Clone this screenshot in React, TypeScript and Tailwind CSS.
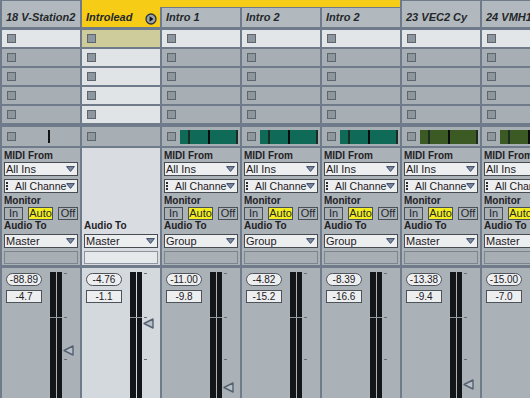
import React from "react";

type Col = {
  name: string;
  kind: "plain" | "group" | "member";
  clip: "none" | "teal" | "olive" | "line";
  route: string;
  vol: string;
  peak: string;
  fader?: number;
};

const cols: Col[] = [
  { name: "18 V-Station2", kind: "plain", clip: "line", route: "Master", vol: "-88.89", peak: "-4.7", fader: 77 },
  { name: "Introlead", kind: "group", clip: "none", route: "Master", vol: "-4.76", peak: "-1.1", fader: 50 },
  { name: "Intro 1", kind: "member", clip: "teal", route: "Group", vol: "-11.00", peak: "-9.8", fader: 114 },
  { name: "Intro 2", kind: "member", clip: "teal", route: "Group", vol: "-4.82", peak: "-15.2" },
  { name: "Intro 2", kind: "member", clip: "teal", route: "Group", vol: "-8.39", peak: "-16.6" },
  { name: "23 VEC2 Cy", kind: "plain", clip: "olive", route: "Master", vol: "-13.38", peak: "-9.4", fader: 111 },
  { name: "24 VMH1", kind: "plain", clip: "olive", route: "Master", vol: "-15.00", peak: "-7.0" },
];

function Square() {
  return <div className="w-[9px] h-[9px] shrink-0 border border-[#5d666f] bg-[#8f979e]" />;
}

function PlayIcon() {
  return (
    <svg width="12" height="12" viewBox="0 0 12 12" className="shrink-0">
      <circle cx="6" cy="6" r="5" fill="#9aa2aa" stroke="#2f3337" strokeWidth="1.3" />
      <path d="M4.6 3.3 L8.4 6 L4.6 8.7 Z" fill="#111" />
    </svg>
  );
}

function Header({ c }: { c: Col }) {
  const text = (
    <span className="text-[11px] leading-[13px] font-bold italic text-[#24272b] whitespace-nowrap">
      {c.name}
    </span>
  );
  if (c.kind === "group") {
    return (
      <div className="h-[27px] bg-[#f6cc16] flex items-end pb-[3px] pl-[4px] pr-[3px]">
        {text}
        <div className="ml-auto mb-[-1px]">
          <PlayIcon />
        </div>
      </div>
    );
  }
  if (c.kind === "member") {
    return (
      <div className="h-[27px] flex flex-col">
        <div className="h-[7px] bg-[#f6cc16]" />
        <div className="h-[1px]" />
        <div className="flex-1 bg-[#b2b9be] flex items-end pb-[3px] pl-[4px]">{text}</div>
      </div>
    );
  }
  return (
    <div className="h-[27px] flex flex-col">
      <div className="h-[1px]" />
      <div className="flex-1 bg-[#b2b9be] flex items-end pb-[3px] pl-[4px]">{text}</div>
    </div>
  );
}

function ClipBar({ kind }: { kind: Col["clip"] }) {
  if (kind === "none") return null;
  if (kind === "line") {
    return (
      <div className="ml-[4px] w-[58px] h-[14px] flex">
        <div className="w-[28px]" />
        <div className="w-[2px] h-[13px] bg-[#121416]" />
      </div>
    );
  }
  const seg = kind === "teal" ? "bg-[#0f6b57]" : "bg-[#3b5a24]";
  return (
    <div className="ml-[4px] w-[58px] h-[14px] flex">
      <div className={`w-[8px] ${seg}`} />
      <div className="w-[2px] bg-[#1d2b25]" />
      <div className={`w-[18px] ${seg}`} />
      <div className="w-[2px] bg-[#0a0d0b]" />
      <div className={`w-[26px] ${seg}`} />
      <div className="w-[2px] bg-[#1d2b25]" />
    </div>
  );
}

function Arrow() {
  return (
    <svg width="9" height="6" viewBox="0 0 9 6" className="shrink-0 ml-auto mr-[2px]">
      <path d="M0.6 0.6 L8.4 0.6 L4.5 5.4 Z" fill="#7b8ba7" stroke="#3d4a5d" strokeWidth="1" />
    </svg>
  );
}

function Drop({ text, dots }: { text: string; dots?: boolean }) {
  return (
    <div className="h-[14px] mx-[2px] border border-[#474c52] bg-[#eceef0] flex items-center overflow-hidden">
      {dots && (
        <div className="ml-[1px] mr-[7px] flex flex-col gap-[1px] shrink-0">
          <div className="w-[2px] h-[2px] bg-[#2a2d30]" />
          <div className="w-[2px] h-[2px] bg-[#2a2d30]" />
          <div className="w-[2px] h-[2px] bg-[#2a2d30]" />
        </div>
      )}
      <span
        className={`whitespace-nowrap leading-[12px] text-[#1e2023] ${
          dots ? "text-[10.5px]" : "text-[11px] pl-[1px]"
        }`}
      >
        {text}
      </span>
      <Arrow />
    </div>
  );
}

function Label({ children }: { children: React.ReactNode }) {
  return <div className="h-[12px] leading-[12px] text-[10px] font-bold text-[#1f2226] pl-[2px] whitespace-nowrap">{children}</div>;
}

function IO({ c }: { c: Col }) {
  const grp = c.kind === "group";
  const btn = "h-[13px] border border-[#4a5057] flex items-center justify-center text-[11px] leading-none text-[#24272a]";
  return (
    <div className={`h-[117px] flex flex-col pt-[2px] ${grp ? "bg-[#d9dde1]" : "bg-[#aab1b7]"}`}>
      <div className={grp ? "invisible" : ""}>
        <Label>MIDI From</Label>
        <Drop text="All Ins" />
        <div className="h-[3px]" />
        <Drop text="All Channe" dots />
        <div className="h-[2px]" />
        <Label>Monitor</Label>
        <div className="flex px-[2px] gap-[5px]">
          <div className={`${btn} w-[19px] bg-[#a9b0b6]`}>In</div>
          <div className={`${btn} w-[25px] bg-[#f2ee22]`}>Auto</div>
          <div className={`${btn} w-[20px] bg-[#a9b0b6]`}>Off</div>
        </div>
      </div>
      <Label>Audio To</Label>
      <div className="h-[2px]" />
      <Drop text={c.route} />
      <div className="h-[3px]" />
      <div className={`h-[13px] mx-[2px] border ${grp ? "border-[#8d969f] bg-[#e6e9ec]" : "border-[#7b8590] bg-[#a7aeb4]"}`} />
    </div>
  );
}

function Mixer({ c }: { c: Col }) {
  const grp = c.kind === "group";
  const val = "w-[36px] h-[13px] border border-[#4d5359] bg-[#eceef0] flex items-center justify-center text-[10px] leading-none text-[#1e2023]";
  return (
    <div className={`flex-1 flex ${grp ? "bg-[#d4d9dd]" : "bg-[#aab1b7]"}`}>
      <div className="w-[48px] pl-[4px] pt-[5px] flex flex-col gap-[4px]">
        <div className={`${val} rounded-full`}>{c.vol}</div>
        <div className={val}>{c.peak}</div>
      </div>
      <div className="relative mt-[4px] w-[12px] flex gap-[1px]">
        <div className="w-[6px] bg-[#121619]" />
        <div className="w-[5px] bg-[#121619]" />
        <div className="absolute left-0 right-0 top-[45px] h-[1px] bg-[#8e979f]" />
      </div>
      <div className="relative flex-1">
        <div className="absolute left-[2px] top-[5px] w-[3px] h-[1px] bg-[#65707c]" />
        <div className="absolute left-[2px] top-[49px] w-[3px] h-[1px] bg-[#65707c]" />
        <div className="absolute left-[2px] top-[91px] w-[3px] h-[1px] bg-[#65707c]" />
        {c.fader !== undefined && (
          <svg width="11" height="11" viewBox="0 0 11 11" className="absolute left-[1px]" style={{ top: c.fader }}>
            <path d="M1 5.5 L10 1 L10 10 Z" fill="#b8c0c7" stroke="#566272" strokeWidth="1.4" strokeLinejoin="round" />
          </svg>
        )}
      </div>
    </div>
  );
}

function Column({ c }: { c: Col }) {
  const grp = c.kind === "group";
  return (
    <div className="flex shrink-0 h-full">
      <div className="w-[2px] flex flex-col">
        {c.kind === "member" && <div className="h-[7px] bg-[#f6cc16]" />}
      </div>
      <div className="w-[78px] flex flex-col">
        <Header c={c} />
        <div className="h-[3px]" />
        <div className="flex flex-col gap-[2px]">
          {[0, 1, 2, 3, 4].map((r) => (
            <div
              key={r}
              className={`h-[17px] flex items-center pl-[5px] ${
                r === 0 ? (grp ? "bg-[#cfcc9c]" : "bg-[#e3e6e9]") : grp ? "bg-[#e1e4e7]" : "bg-[#a8afb4]"
              }`}
            >
              <Square />
            </div>
          ))}
        </div>
        <div className="h-[4px]" />
        <div className="h-[19px] flex items-center pl-[5px] bg-[#a8afb4]">
          <Square />
          <ClipBar kind={c.clip} />
        </div>
        <div className="h-[2px]" />
        <IO c={c} />
        <div className="h-[3px]" />
        <Mixer c={c} />
      </div>
    </div>
  );
}

export default function App() {
  return (
    <div className="w-[530px] h-[398px] overflow-hidden flex bg-[#6f7b8a] font-['Liberation_Sans',Arial,sans-serif]">
      {cols.map((c, i) => (
        <Column key={i} c={c} />
      ))}
    </div>
  );
}
